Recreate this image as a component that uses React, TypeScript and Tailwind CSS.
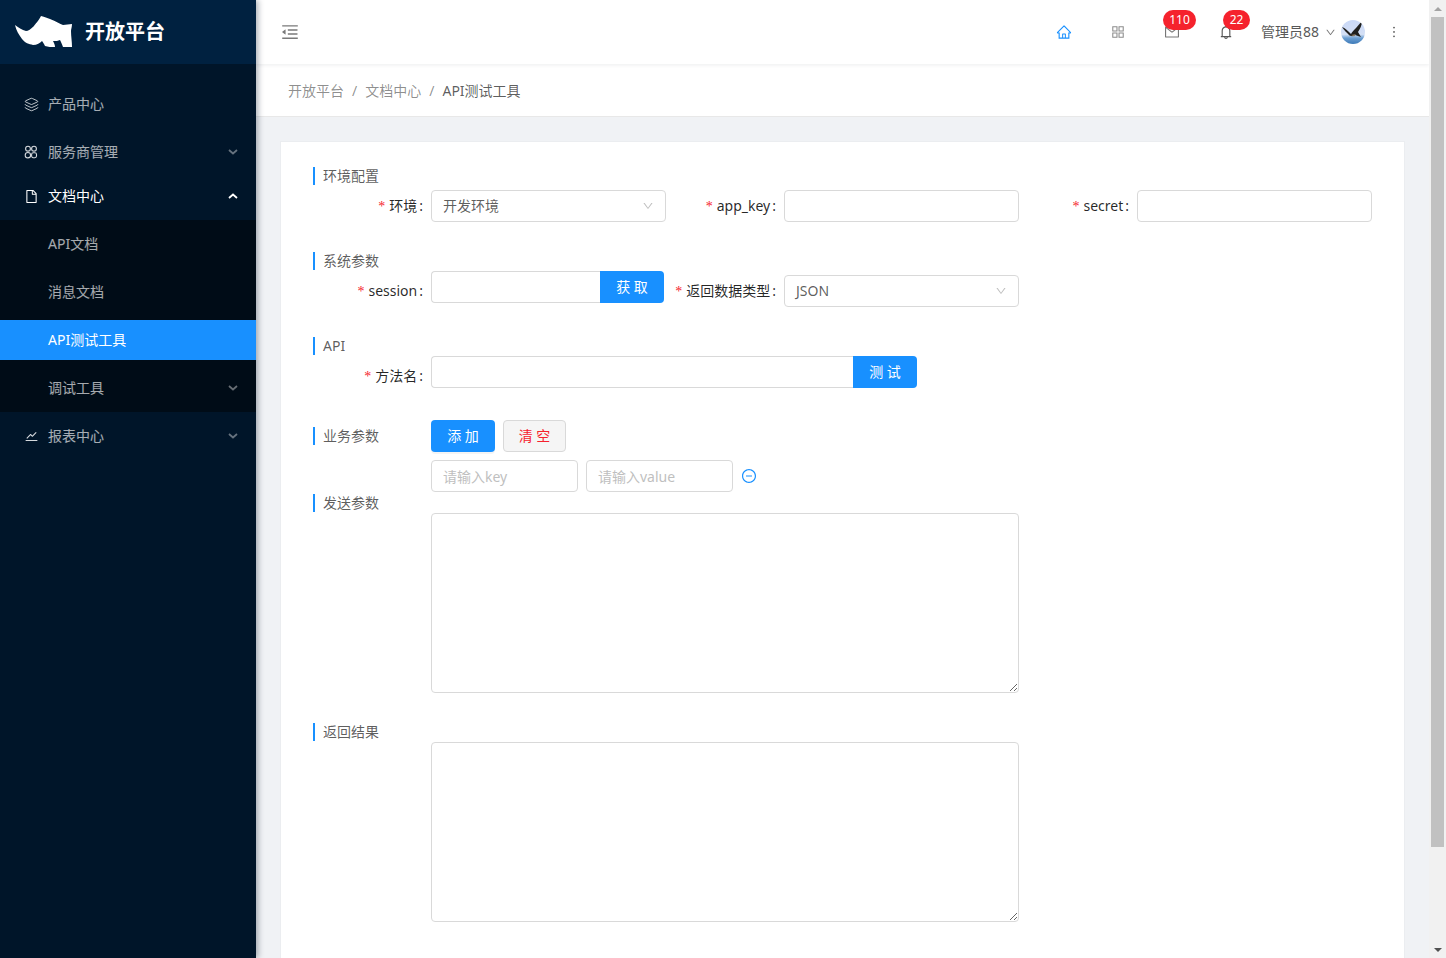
import type { ReactNode } from "react";
import {
  AiOutlineAppstore,
  AiOutlineBell,
  AiOutlineDown,
  AiOutlineFile,
  AiOutlineHome,
  AiOutlineMail,
  AiOutlineMenuFold,
  AiOutlineMinusCircle,
  AiOutlineMore,
  AiOutlineStock,
} from "react-icons/ai";
import { Layers } from "lucide-react";

function Rhino() {
  return (
    <svg viewBox="0 0 60 34" className="w-[60px] h-[34px]" fill="#fff">
      <path d="M1 10C4 12 8 15 12 16C14 16 17 14 20 11C21 9 24 7 27 1C31 2 33 3 36 4C42 6 46 9 49 10C52 10 55 9 58 9C58 12 57 14 57 16C57 21 58 27 58 32L49 32C48 29 47 27 46 25C44 26 42 26 39 26C40 28 41 30 41 32C37 32 34 32 31 31C30 29 29 27 28 26C26 28 23 30 19 30C15 29 11 28 8 24C5 20 2 15 1 10Z" />
    </svg>
  );
}

function Chevron({ up, open }: { up?: boolean; open?: boolean }) {
  return (
    <svg viewBox="0 0 10 6" className={`w-[10px] h-[6px] ${open ? "text-white" : "text-white/40"}`} fill="none">
      <path d={up ? "M1 5L5 1.5L9 5" : "M1 1L5 4.5L9 1"} stroke="currentColor" strokeWidth="1.8" />
    </svg>
  );
}

function ServiceIcon() {
  return (
    <svg viewBox="0 0 14 14" className="w-[14px] h-[14px]" fill="none" stroke="currentColor" strokeWidth="1.1">
      <circle cx="4" cy="3.7" r="2.4" />
      <circle cx="10" cy="3.7" r="2.4" />
      <circle cx="3.9" cy="10.2" r="2.7" />
      <rect x="7.6" y="7.8" width="4.9" height="4.9" rx="1.6" />
    </svg>
  );
}

function MenuItem({
  icon,
  label,
  arrow,
  open,
  active,
  sub,
  className = "",
}: {
  icon?: ReactNode;
  label: string;
  arrow?: boolean;
  open?: boolean;
  active?: boolean;
  sub?: boolean;
  className?: string;
}) {
  const color = active || open ? "text-white" : "text-white/65";
  return (
    <div className={`flex items-center h-10 pr-[18px] ${sub ? "pl-12" : "pl-6"} ${active ? "bg-[#1890ff]" : ""} ${color} ${className}`}>
      {icon && <span className="w-6 flex items-center text-[#d5d9dd]">{icon}</span>}
      <span className="flex-1">{label}</span>
      {arrow && <Chevron up={open} open={open} />}
    </div>
  );
}

function Sidebar() {
  return (
    <aside className="w-64 shrink-0 bg-[#001529] z-20 shadow-[2px_0_6px_rgba(0,21,41,0.35)]">
      <div className="h-16 bg-[#002140] flex items-center pl-[14px]">
        <Rhino />
        <span className="ml-[11px] text-xl font-bold text-white">开放平台</span>
      </div>
      <nav className="pt-5">
        <MenuItem icon={<Layers size={15} strokeWidth={1.4} />} label="产品中心" />
        <MenuItem className="mt-2" icon={<ServiceIcon />} label="服务商管理" arrow />
        <MenuItem className="mt-1" icon={<AiOutlineFile size={15} className="text-white" />} label="文档中心" arrow open />
        <div className="mt-1 bg-[#000c17] py-1">
          <MenuItem sub label="API文档" />
          <MenuItem sub className="mt-2" label="消息文档" />
          <MenuItem sub className="mt-2" active label="API测试工具" />
          <MenuItem sub className="mt-2" label="调试工具" arrow />
        </div>
        <MenuItem className="mt-1" icon={<AiOutlineStock size={15} />} label="报表中心" arrow />
      </nav>
    </aside>
  );
}

function Badge({ children, className }: { children: string; className: string }) {
  return (
    <span className={`absolute top-[10px] h-5 rounded-[10px] bg-[#f5222d] text-white text-xs leading-5 text-center ${className}`}>
      {children}
    </span>
  );
}

function Eagle() {
  return (
    <svg viewBox="0 0 24 24" className="w-6 h-6 rounded-full">
      <defs>
        <linearGradient id="sky" x1="0" y1="0" x2="0" y2="1">
          <stop offset="0" stopColor="#c9d8f7" />
          <stop offset="0.6" stopColor="#d4e0f5" />
          <stop offset="0.75" stopColor="#6d9fd2" />
          <stop offset="1" stopColor="#3c7ab8" />
        </linearGradient>
      </defs>
      <rect width="24" height="24" fill="url(#sky)" />
      <path d="M1 7C4 8 7 11 10 14C11 12 13 10 15 8C17 6 19 3 21 1C21 5 19 9 17 12L20 17L14 15C12 17 9 16 8 15C6 13 3 10 1 7Z" fill="#20201f" />
      <path d="M10 15L15 14L13 16.5Z" fill="#8a7760" />
    </svg>
  );
}

function Header() {
  return (
    <header className="relative z-10 h-16 shrink-0 bg-white flex items-center shadow-[0_1px_4px_rgba(0,21,41,0.08)]">
      <span className="ml-6 text-[#7a7a7a]">
        <AiOutlineMenuFold size={20} />
      </span>
      <div className="ml-auto flex items-center h-full text-[#8c8c8c]">
        <div className="relative flex">
          <span className="w-[54px] flex justify-center text-[#1890ff]"><AiOutlineHome size={16} /></span>
          <span className="w-[54px] flex justify-center"><AiOutlineAppstore size={16} /></span>
          <span className="w-[54px] flex justify-center text-[#777]"><AiOutlineMail size={16} /></span>
          <span className="w-[54px] flex justify-center text-[#555]"><AiOutlineBell size={16} /></span>
        </div>
        <span className="ml-2 text-[#595959]">管理员88</span>
        <AiOutlineDown size={11} className="ml-[6px] text-[#777]" />
        <span className="ml-[5px]"><Eagle /></span>
        <span className="ml-[21px] mr-[27px] text-[#555]"><AiOutlineMore size={16} /></span>
      </div>
      <Badge className="left-[907px] w-[33px]">110</Badge>
      <Badge className="left-[967px] w-[27px]">22</Badge>
    </header>
  );
}

function Breadcrumb() {
  return (
    <div className="h-[53px] shrink-0 bg-white border-b border-[#e8e8e8] flex items-center pl-8 text-black/45 pt-[1px]">
      <span>开放平台</span>
      <span className="mx-2">/</span>
      <span>文档中心</span>
      <span className="mx-2">/</span>
      <span className="text-black/65">API测试工具</span>
    </div>
  );
}

function Title({ children, className = "" }: { children: string; className?: string }) {
  return (
    <div className={`h-[18px] border-l-2 border-[#1890ff] pl-2 leading-[18px] text-black/65 ${className}`}>
      {children}
    </div>
  );
}

function Label({ children }: { children: string }) {
  return (
    <label className="w-[118px] shrink-0 pr-2 text-right text-black/85 leading-8">
      <span className="text-[#f5222d] mr-1 font-['Liberation_Serif',serif]">*</span>
      {children}
      <span className="ml-[2px]">:</span>
    </label>
  );
}

const inputCls =
  "h-8 border border-[#d9d9d9] rounded px-[11px] outline-none bg-white text-black/65 placeholder:text-[#bfbfbf]";

function Select({ value }: { value: string }) {
  return (
    <div className="w-[235px] h-8 border border-[#d9d9d9] rounded pl-[11px] pr-[11px] flex items-center justify-between bg-white text-black/65">
      <span>{value}</span>
      <AiOutlineDown size={12} className="text-[#bfbfbf]" />
    </div>
  );
}

function InputButton({ width, label }: { width: string; label: string }) {
  return (
    <div className={`flex h-8 -mt-1 ${width}`}>
      <input className={`${inputCls} flex-1 min-w-0 rounded-r-none border-r-0`} />
      <button className="w-16 h-8 shrink-0 bg-[#1890ff] text-white rounded-r">{label}</button>
    </div>
  );
}

function Form() {
  return (
    <div className="bg-white border border-[#ebedf0] pt-[25px] px-8 pb-10 flex-1">
      <Title>环境配置</Title>
      <div className="mt-[5px] grid grid-cols-[353px_353px_353px]">
        <div className="flex">
          <Label>环境</Label>
          <Select value="开发环境" />
        </div>
        <div className="flex">
          <Label>app_key</Label>
          <input className={`${inputCls} w-[235px]`} />
        </div>
        <div className="flex">
          <Label>secret</Label>
          <input className={`${inputCls} w-[235px]`} />
        </div>
      </div>

      <Title className="mt-[29px]">系统参数</Title>
      <div className="mt-[5px] grid grid-cols-[353px_353px_353px]">
        <div className="flex">
          <Label>session</Label>
          <InputButton width="w-[233px]" label="获 取" />
        </div>
        <div className="flex">
          <Label>返回数据类型</Label>
          <Select value="JSON" />
        </div>
      </div>

      <Title className="mt-[29px]">API</Title>
      <div className="mt-[5px] flex">
        <Label>方法名</Label>
        <InputButton width="w-[486px]" label="测 试" />
      </div>

      <div className="mt-[27px] flex items-center">
        <Title className="w-[118px] shrink-0">业务参数</Title>
        <div className="flex gap-2">
          <button className="w-16 h-8 rounded bg-[#1890ff] text-white shadow-[0_2px_0_rgba(0,0,0,0.045)]">添 加</button>
          <button className="w-[63px] h-8 rounded border border-[#d9d9d9] bg-[#f5f5f5] text-[#f5222d]">清 空</button>
        </div>
      </div>
      <div className="mt-2 ml-[118px] flex items-center gap-2">
        <input className={`${inputCls} w-[147px]`} placeholder="请输入key" />
        <input className={`${inputCls} w-[147px]`} placeholder="请输入value" />
        <AiOutlineMinusCircle size={16} className="text-[#1890ff]" />
      </div>

      <Title className="mt-[2px]">发送参数</Title>
      <div className="mt-[1px] ml-[118px]">
        <textarea className="block w-[588px] h-[180px] border border-[#d9d9d9] rounded px-[11px] py-1 outline-none" />
      </div>

      <Title className="mt-[30px]">返回结果</Title>
      <div className="mt-[1px] ml-[118px]">
        <textarea className="block w-[588px] h-[180px] border border-[#d9d9d9] rounded px-[11px] py-1 outline-none" />
      </div>
    </div>
  );
}

function Scrollbar() {
  return (
    <div className="w-[17px] shrink-0 bg-[#f1f1f1] flex flex-col items-center z-10">
      <div className="h-[17px] flex items-center justify-center">
        <div className="w-0 h-0 border-x-[4px] border-x-transparent border-b-[4px] border-b-[#a3a3a3]" />
      </div>
      <div className="w-[13px] h-[830px] bg-[#c1c1c1]" />
      <div className="flex-1 flex items-end pb-[6px]">
        <div className="w-0 h-0 border-x-[4px] border-x-transparent border-t-[4px] border-t-[#505050]" />
      </div>
    </div>
  );
}

export default function App() {
  return (
    <div className="h-screen flex overflow-hidden bg-[#f0f2f5] text-sm font-['Noto_Sans','Noto_Sans_CJK_SC',sans-serif]">
      <Sidebar />
      <main className="flex-1 min-w-0 flex flex-col overflow-hidden">
        <Header />
        <Breadcrumb />
        <div className="flex-1 flex flex-col pt-6 px-6 overflow-hidden">
          <Form />
        </div>
      </main>
      <Scrollbar />
    </div>
  );
}
